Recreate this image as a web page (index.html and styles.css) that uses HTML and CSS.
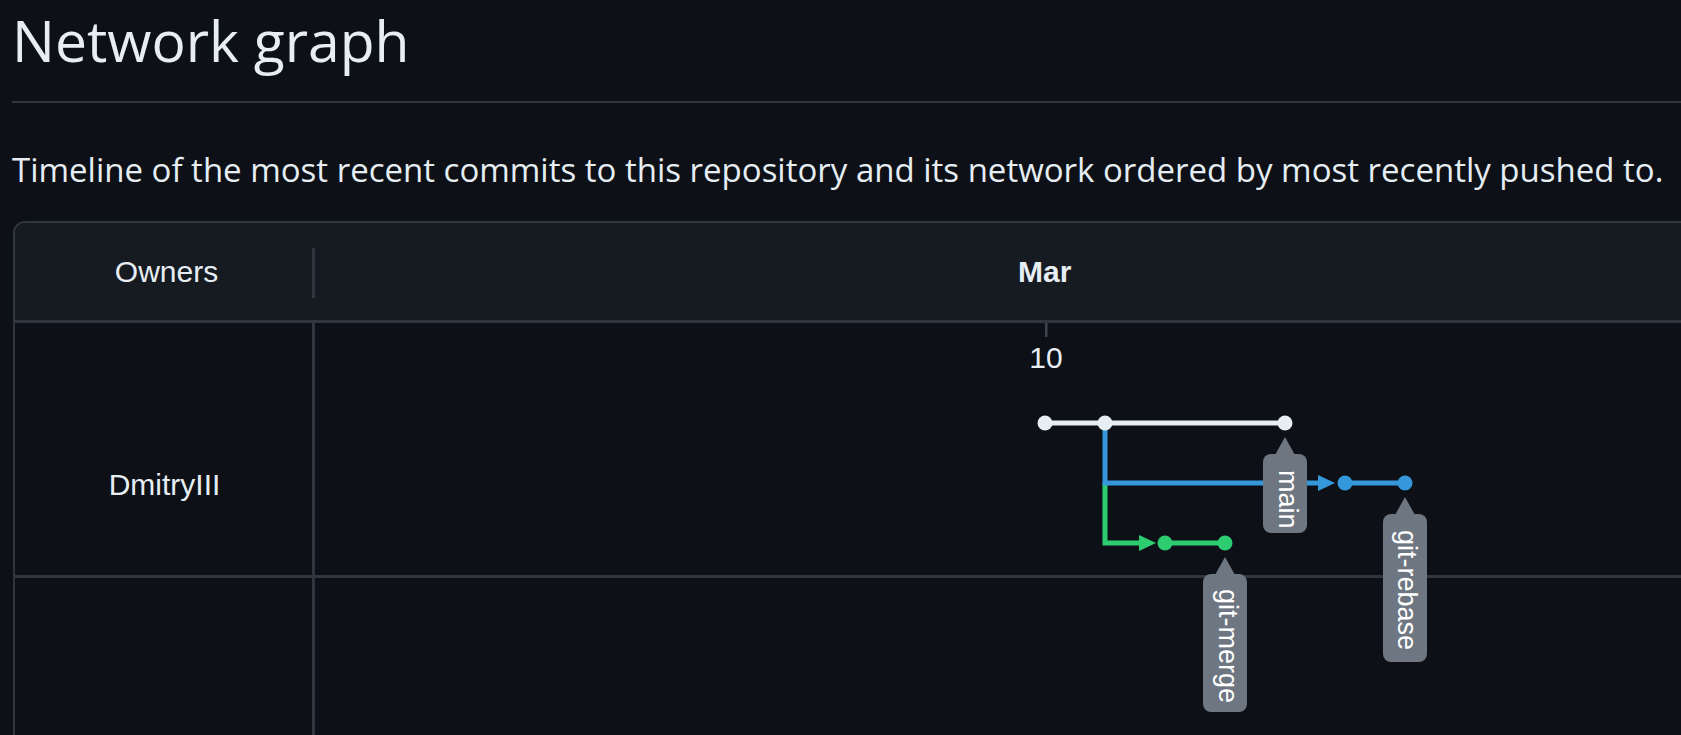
FILE: index.html
```html
<!DOCTYPE html>
<html lang="en">
<head>
<meta charset="utf-8">
<title>Network graph</title>
<link rel="stylesheet" href="styles.css">
</head>
<body>
<main class="page">
  <h2 class="title">Network graph</h2>
  <p class="lead">Timeline of the most recent commits to this repository and its network ordered by most recently pushed to.</p>
  <div class="network">
    <div class="net-head">
      <div class="owners-head">Owners</div>
      <div class="head-divider"></div>
      <div class="month-head"><span class="month">Mar</span></div>
    </div>
    <div class="net-body">
      <div class="row row-first">
        <div class="owner">DmitryIII</div>
        <div class="lane"></div>
      </div>
      <div class="row row-second">
        <div class="owner"></div>
        <div class="lane"></div>
      </div>
      <svg class="graph" width="1700" height="420" viewBox="15 323 1700 420" xmlns="http://www.w3.org/2000/svg">
        <rect class="tick" x="1045" y="323" width="2.5" height="14"/>
        <text class="day" x="1046" y="368">10</text>

        <polyline class="br green" points="1105,483 1105,543 1140,543"/>
        <polyline class="br blue" points="1105,423 1105,483 1319,483"/>
        <line class="br white" x1="1045" y1="423" x2="1285" y2="423"/>
        <line class="br blue" x1="1345" y1="483" x2="1405" y2="483"/>
        <line class="br green" x1="1165" y1="543" x2="1225" y2="543"/>

        <polygon class="fill-blue" points="1318,475 1318,491 1335,483"/>
        <polygon class="fill-green" points="1139,535 1139,551 1156,543"/>

        <circle class="fill-white" cx="1045" cy="423" r="7.5"/>
        <circle class="fill-white" cx="1105" cy="423" r="7.5"/>
        <circle class="fill-white" cx="1285" cy="423" r="7.5"/>
        <circle class="fill-blue" cx="1345" cy="483" r="7.5"/>
        <circle class="fill-blue" cx="1405" cy="483" r="7.5"/>
        <circle class="fill-green" cx="1165" cy="543" r="7.5"/>
        <circle class="fill-green" cx="1225" cy="543" r="7.5"/>

        <polygon class="tag" points="1285,437 1295,455 1275,455"/>
        <rect class="tag" x="1263" y="454" width="44" height="79" rx="8"/>
        <text class="tag-text" transform="translate(1279,470) rotate(90)">main</text>

        <polygon class="tag" points="1405,497 1415,515 1395,515"/>
        <rect class="tag" x="1383" y="514" width="44" height="148" rx="8"/>
        <text class="tag-text" transform="translate(1398,530) rotate(90)">git-rebase</text>

        <polygon class="tag" points="1225,557 1235,575 1215,575"/>
        <rect class="tag" x="1203" y="574" width="44" height="138" rx="8"/>
        <text class="tag-text" transform="translate(1219,589) rotate(90)">git-merge</text>
      </svg>
    </div>
  </div>
</main>
</body>
</html>
```

FILE: styles.css
```css
html, body {
  margin: 0;
  padding: 0;
  background: #0d1117;
  overflow: hidden;
}

body {
  color: #e6edf3;
  font-family: "Open Sans", "Noto Sans", sans-serif;
}

.page {
  width: 2000px;
  padding-left: 12px;
}

.title {
  margin: 0;
  font-size: 57px;
  font-weight: 400;
  line-height: 80px;
  padding-bottom: 21px;
  border-bottom: 2px solid #30363d;
}

.lead {
  margin: 43px 0 27px;
  font-size: 33px;
  line-height: 48px;
  white-space: nowrap;
}

.network {
  margin-left: 1px;
  border: 2px solid #30363d;
  border-radius: 12px 12px 0 0;
  font-family: "Liberation Sans", Arial, sans-serif;
  font-size: 30px;
  overflow: hidden;
}

.net-head {
  display: flex;
  align-items: center;
  height: 97px;
  background: #161b22;
  border-bottom: 3px solid #30363d;
}

.owners-head {
  width: 291px;
  padding-left: 6px;
  text-align: center;
  line-height: 34px;
}

.head-divider {
  width: 3px;
  height: 50px;
  margin-top: 3px;
  background: #30363d;
}

.month-head {
  flex: 1;
  padding-left: 703px;
  line-height: 34px;
}

.month {
  font-weight: 700;
}

.net-body {
  position: relative;
}

.row {
  display: flex;
  border-bottom: 3px solid #30363d;
}

.row-first {
  height: 252px;
}

.row-second {
  height: 160px;
}

.owner {
  width: 300px;
  border-right: 3px solid #30363d;
  text-align: center;
  line-height: 34px;
  padding-top: 145px;
  padding-left: 2px;
  box-sizing: border-box;
}

.lane {
  flex: 1;
}

.graph {
  position: absolute;
  left: 0;
  top: 0;
}

.tick {
  fill: #3d444d;
}

.day {
  fill: #e6edf3;
  font-family: "Liberation Sans", Arial, sans-serif;
  font-size: 30px;
  text-anchor: middle;
}

.br {
  fill: none;
  stroke-width: 5;
  stroke-linejoin: miter;
  stroke-linecap: butt;
}

.br.white { stroke: #e6edf3; }
.br.blue { stroke: #3498db; }
.br.green { stroke: #2ecc71; }

.fill-white { fill: #e6edf3; }
.fill-blue { fill: #3498db; }
.fill-green { fill: #2ecc71; }

.tag {
  fill: #6e7681;
}

.tag-text {
  fill: #ffffff;
  font-family: "Liberation Sans", Arial, sans-serif;
  font-size: 27px;
}
```
